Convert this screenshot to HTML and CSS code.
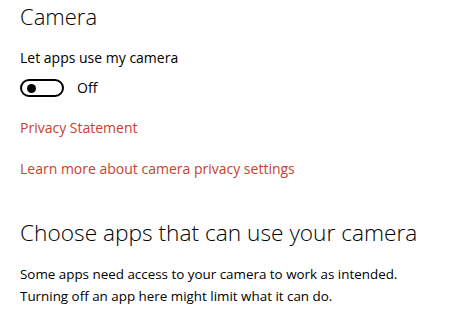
FILE: index.html
```html
<!DOCTYPE html>
<html lang="en">
<head>
<meta charset="utf-8">
<link rel="stylesheet" href="styles.css">
</head>
<body>
<main class="page">
  <h1 class="title">Camera</h1>
  <p class="label">Let apps use my camera</p>
  <div class="toggle-row">
    <span class="toggle"><span class="knob"></span></span>
    <span class="state">Off</span>
  </div>
  <a class="link link-first" href="#">Privacy Statement</a>
  <a class="link link-second" href="#">Learn more about camera privacy settings</a>
  <h2 class="subtitle">Choose apps that can use your camera</h2>
  <p class="desc">Some apps need access to your camera to work as intended.<br>Turning off an app here might limit what it can do.</p>
</main>
</body>
</html>
```
FILE: styles.css
```css
html, body {
  margin: 0;
  padding: 0;
  background: #ffffff;
}
body {
  font-family: "Open Sans", "Noto Sans", sans-serif;
  color: #000000;
  width: 460px;
  height: 318px;
  overflow: hidden;
}
.page {
  display: flex;
  flex-direction: column;
  align-items: flex-start;
  padding: 0 0 0 20px;
}
.title {
  margin: 0;
  font-weight: 300;
  font-size: 22px;
  line-height: 32px;
}
.label {
  margin: 16px 0 0 0;
  font-size: 14px;
  line-height: 20px;
}
.toggle-row {
  display: flex;
  align-items: center;
  gap: 13px;
  margin-top: 10px;
}
.toggle {
  box-sizing: border-box;
  width: 44px;
  height: 18px;
  border: 2px solid #000;
  border-radius: 9px;
  display: flex;
  align-items: center;
  padding-left: 5px;
}
.knob {
  width: 9px;
  height: 9px;
  border-radius: 50%;
  background: #000;
}
.state {
  font-size: 14px;
  line-height: 20px;
}
.link {
  color: #c8412f;
  text-decoration: none;
  font-size: 14px;
  line-height: 20px;
}
.link-first {
  margin-top: 20px;
}
.link-second {
  margin-top: 21px;
}
.subtitle {
  margin: 38px 0 0 0;
  font-weight: 300;
  font-size: 22.7px;
  line-height: 32px;
}
.desc {
  margin: 14px 0 0 0;
  font-size: 13.4px;
  line-height: 22px;
}
```
